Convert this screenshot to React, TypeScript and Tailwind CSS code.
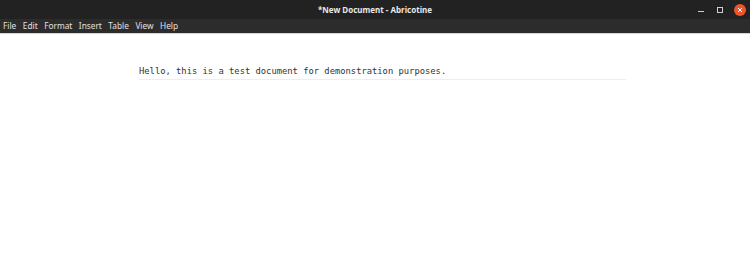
const menus = ["File", "Edit", "Format", "Insert", "Table", "View", "Help"];

const App = () => {
    return (
        <div className="w-[750px] h-[257px] flex flex-col bg-white overflow-hidden" style={{ fontFamily: '"Noto Sans", "DejaVu Sans", sans-serif' }}>
            <div className="relative h-[19px] bg-[#222222] flex items-center justify-center">
                <span className="text-[8px] font-bold text-[#e8e8e8] leading-none">*New Document - Abricotine</span>
                <div className="absolute right-[4px] top-0 h-[19px] flex items-center gap-[9px]">
                    <svg width="10" height="10" viewBox="0 0 10 10">
                        <rect x="2" y="6" width="6" height="1" fill="#cfcfcf" />
                    </svg>
                    <svg width="10" height="10" viewBox="0 0 10 10">
                        <rect x="2.5" y="2.5" width="5" height="5" fill="none" stroke="#cfcfcf" strokeWidth="1" />
                    </svg>
                    <div className="w-[12px] h-[12px] rounded-full bg-[#e9562b] flex items-center justify-center">
                        <svg width="6" height="6" viewBox="0 0 6 6">
                            <path d="M1 1L5 5M5 1L1 5" stroke="#fff" strokeWidth="1" />
                        </svg>
                    </div>
                </div>
            </div>
            <div className="h-[15px] bg-[#2c2c2c] flex items-center pl-[3px] gap-[6.5px] border-b border-[#d6d6d6]">
                {menus.map((m) => (
                    <span key={m} className="text-[8.3px] text-[#e0e0e0] leading-none">{m}</span>
                ))}
            </div>
            <div className="flex-1 pt-[30px] pl-[139px]">
                <div className="w-[487px] border-b border-[#eeeeee] pb-[1px]">
                    <p className="text-[8.8px] text-[#333333] leading-[14px]" style={{ fontFamily: '"DejaVu Sans Mono", monospace' }}>
                        Hello, this is a test document for demonstration purposes.
                    </p>
                </div>
            </div>
        </div>
    );
};

export default App;
